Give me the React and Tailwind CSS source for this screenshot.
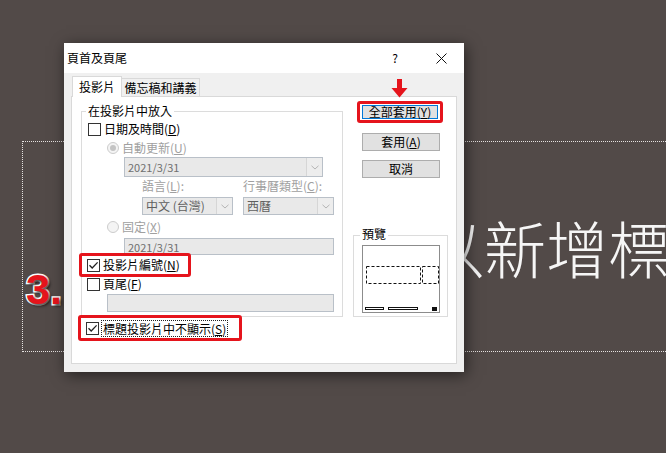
import React from "react";

const F = "font-['Noto_Sans_CJK_TC','Noto_Sans',sans-serif]";

function U({ children }) {
  return <span className="underline underline-offset-[1px] decoration-[1px]">{children}</span>;
}

function Check({ checked }) {
  return (
    <span className="w-[13px] h-[13px] border border-[#333333] bg-white flex items-center justify-center shrink-0">
      {checked && (
        <svg width="11" height="11" viewBox="0 0 11 11">
          <path d="M1.5 5.2 L4.2 8 L9.6 2.4" fill="none" stroke="#222" strokeWidth="1.3" />
        </svg>
      )}
    </span>
  );
}

function Radio({ selected }) {
  return (
    <span className="w-[12px] h-[12px] rounded-full border border-[#cccccc] bg-[#f4f4f4] flex items-center justify-center shrink-0">
      {selected && <span className="w-[6px] h-[6px] rounded-full bg-[#c4c4c4]" />}
    </span>
  );
}

function Chevron() {
  return (
    <span className="w-[16px] h-full bg-[#ededed] border-l border-[#d6d6d6] flex items-center justify-center shrink-0">
      <svg width="8" height="5" viewBox="0 0 8 5">
        <path d="M0.5 0.8 L4 4 L7.5 0.8" fill="none" stroke="#b4b4b4" strokeWidth="1" />
      </svg>
    </span>
  );
}

export default function App() {
  return (
    <div className="relative w-[666px] h-[453px] overflow-hidden bg-[#524a48]">
      {/* slide title placeholder */}
      <div className="absolute left-[22px] top-[141px] w-[924px] h-[211px] border border-dotted border-[#e6e2e1] flex items-center justify-center">
        <span className={`${F} font-light text-[62px] leading-none text-[#f6f6f6] whitespace-nowrap`}>
          按一下以新增標題
        </span>
      </div>

      {/* step number */}
      <span className="absolute left-[26px] top-[268px] font-['Liberation_Sans',Arial,sans-serif] font-bold text-[43px] leading-none text-[#e5141c] [-webkit-text-stroke:3px_white] [paint-order:stroke_fill] [text-shadow:2px_2px_3px_rgba(0,0,0,0.7)]">
        3.
      </span>

      {/* dialog */}
      <div className={`absolute left-[64px] top-[43px] w-[400px] h-[329px] bg-[#f0f0f0] shadow-[2px_3px_14px_rgba(0,0,0,0.55)] flex flex-col ${F} text-[12px] text-black`}>
        {/* title bar */}
        <div className="h-[30px] bg-white flex items-center shrink-0">
          <span className="pl-[3px] leading-[16px]">頁首及頁尾</span>
          <div className="ml-auto flex h-full">
            <div className="w-[46px] h-full flex items-center justify-center text-[12px]">?</div>
            <div className="w-[46px] h-full flex items-center justify-center">
              <svg width="11" height="11" viewBox="0 0 11 11">
                <path d="M0.5 0.5 L10.5 10.5 M10.5 0.5 L0.5 10.5" stroke="#111" strokeWidth="1" />
              </svg>
            </div>
          </div>
        </div>

        {/* tabs */}
        <div className="h-[23px] flex items-end pl-[8px] shrink-0">
          <div className="relative z-10 w-[50px] h-[21px] mb-[-1px] bg-white border-x border-t border-[#d9d9d9] flex items-center justify-center leading-[16px]">
            投影片
          </div>
          <div className="w-[78px] h-[18px] bg-[#f0f0f0] border-t border-r border-[#d9d9d9] flex items-center justify-center leading-[16px]">
            備忘稿和講義
          </div>
        </div>

        {/* panel */}
        <div className="mx-[7px] h-[268px] bg-white border border-[#d9d9d9] flex flex-col">
          <div className="flex">
            {/* left group */}
            <div className="ml-[9px] mt-[14px] w-[262px] h-[206px] border border-[#dcdcdc] relative flex flex-col">
              <span className="absolute left-[4px] top-[-9px] px-[2px] bg-white leading-[16px]">在投影片中放入</span>

              <div className="mt-[9px] h-[16px] pl-[6px] flex items-center gap-[3px]">
                <Check />
                <span className="leading-[16px]">日期及時間(<U>D</U>)</span>
              </div>
              <div className="mt-[3px] h-[16px] pl-[25px] flex items-center gap-[3px] text-[#a0a0a0]">
                <Radio selected />
                <span className="leading-[16px]">自動更新(<U>U</U>)</span>
              </div>
              <div className="mt-[1px] ml-[42px] w-[199px] h-[20px] border border-[#b9c0c8] bg-[#e9e9e9] flex items-center">
                <span className="pl-[3px] flex-1 text-[11px] text-[#707070] leading-[14px]">2021/3/31</span>
                <Chevron />
              </div>
              <div className="mt-[1px] h-[15px] flex text-[#a0a0a0] leading-[15px]">
                <span className="ml-[60px] w-[101px]">語言(<U>L</U>):</span>
                <span>行事曆類型(<U>C</U>):</span>
              </div>
              <div className="mt-[4px] h-[18px] flex gap-[10px] ml-[60px]">
                <div className="w-[91px] h-full border border-[#b9c0c8] bg-[#e9e9e9] flex items-center">
                  <span className="pl-[3px] flex-1 text-[#5f5f5f] leading-[14px] whitespace-nowrap">中文 (台灣)</span>
                  <Chevron />
                </div>
                <div className="w-[91px] h-full border border-[#b9c0c8] bg-[#e9e9e9] flex items-center">
                  <span className="pl-[3px] flex-1 text-[#5f5f5f] leading-[14px]">西曆</span>
                  <Chevron />
                </div>
              </div>
              <div className="mt-[4px] h-[16px] pl-[25px] flex items-center gap-[3px] text-[#a0a0a0]">
                <Radio />
                <span className="leading-[16px]">固定(<U>X</U>)</span>
              </div>
              <div className="mt-[3px] ml-[42px] w-[210px] h-[17px] border border-[#b9c0c8] bg-[#e9e9e9] flex items-center">
                <span className="pl-[3px] text-[11px] text-[#707070] leading-[14px]">2021/3/31</span>
              </div>
              <div className="relative z-10 mt-[-2px] ml-[-3px] w-[112px] h-[24px] border-[3px] border-[#e5141c] rounded-[3px] bg-white pl-[5px] flex items-center gap-[3px]">
                <Check checked />
                <span className="leading-[16px]">投影片編號(<U>N</U>)</span>
              </div>
              <div className="mt-[-1px] h-[16px] pl-[5px] flex items-center gap-[3px]">
                <Check />
                <span className="leading-[16px]">頁尾(<U>F</U>)</span>
              </div>
              <div className="mt-[2px] ml-[25px] w-[227px] h-[18px] border border-[#b9c0c8] bg-[#e9e9e9]" />
            </div>

            {/* right column */}
            <div className="ml-[10px] w-[95px] pt-[4px] flex flex-col">
              <div className="ml-[4px] w-[86px] h-[22px] border-[3px] border-[#e5141c] rounded-[3px] bg-white py-[1px] px-[2px]">
                <div className="h-full border border-[#0078d7] bg-[#e1e1e1] flex items-center justify-center leading-[14px]">
                  全部套用(<U>Y</U>)
                </div>
              </div>
              <div className="mt-[10px] ml-[9px] w-[78px] h-[18px] border border-[#adadad] bg-[#e1e1e1] flex items-center justify-center leading-[14px]">
                套用(<U>A</U>)
              </div>
              <div className="mt-[9px] ml-[9px] w-[78px] h-[18px] border border-[#adadad] bg-[#e1e1e1] flex items-center justify-center leading-[14px]">
                取消
              </div>
              <div className="mt-[57px] w-[95px] h-[82px] border border-[#dcdcdc] relative">
                <span className="absolute left-[6px] top-[-10px] px-[2px] bg-white leading-[16px]">預覽</span>
                <div className="ml-[8px] mt-[9px] w-[78px] h-[68px] border border-[#8c8c8c] bg-white">
                  <svg width="76" height="66" viewBox="0 0 76 66">
                    <rect x="3.5" y="20.5" width="54" height="17" fill="none" stroke="#111" strokeWidth="1" strokeDasharray="3 2" />
                    <rect x="59.5" y="20.5" width="16" height="17" fill="none" stroke="#111" strokeWidth="1" strokeDasharray="3 2" />
                    <rect x="2.5" y="61.5" width="18" height="2" fill="none" stroke="#111" strokeWidth="1" />
                    <rect x="25.5" y="61.5" width="29" height="2" fill="none" stroke="#111" strokeWidth="1" />
                    <rect x="69" y="61" width="5" height="4" fill="#111" />
                  </svg>
                </div>
              </div>
            </div>
          </div>

          {/* bottom checkbox */}
          <div className="relative z-10 mt-[-2px] ml-[6px] w-[164px] h-[26px] border-[3px] border-[#e5141c] rounded-[3px] bg-white pl-[5px] flex items-center gap-[2px]">
            <Check checked />
            <span className="border border-dotted border-[#222] px-[1px] leading-[15px]">標題投影片中不顯示(<U>S</U>)</span>
          </div>
        </div>
      </div>

      {/* red arrow */}
      <svg className="absolute left-[391px] top-[79px]" width="17" height="19" viewBox="0 0 17 19">
        <path d="M6 0 L11 0 L11 9 L16.5 9 L8.5 18.5 L0.5 9 L6 9 Z" fill="#e5141c" />
      </svg>
    </div>
  );
}
